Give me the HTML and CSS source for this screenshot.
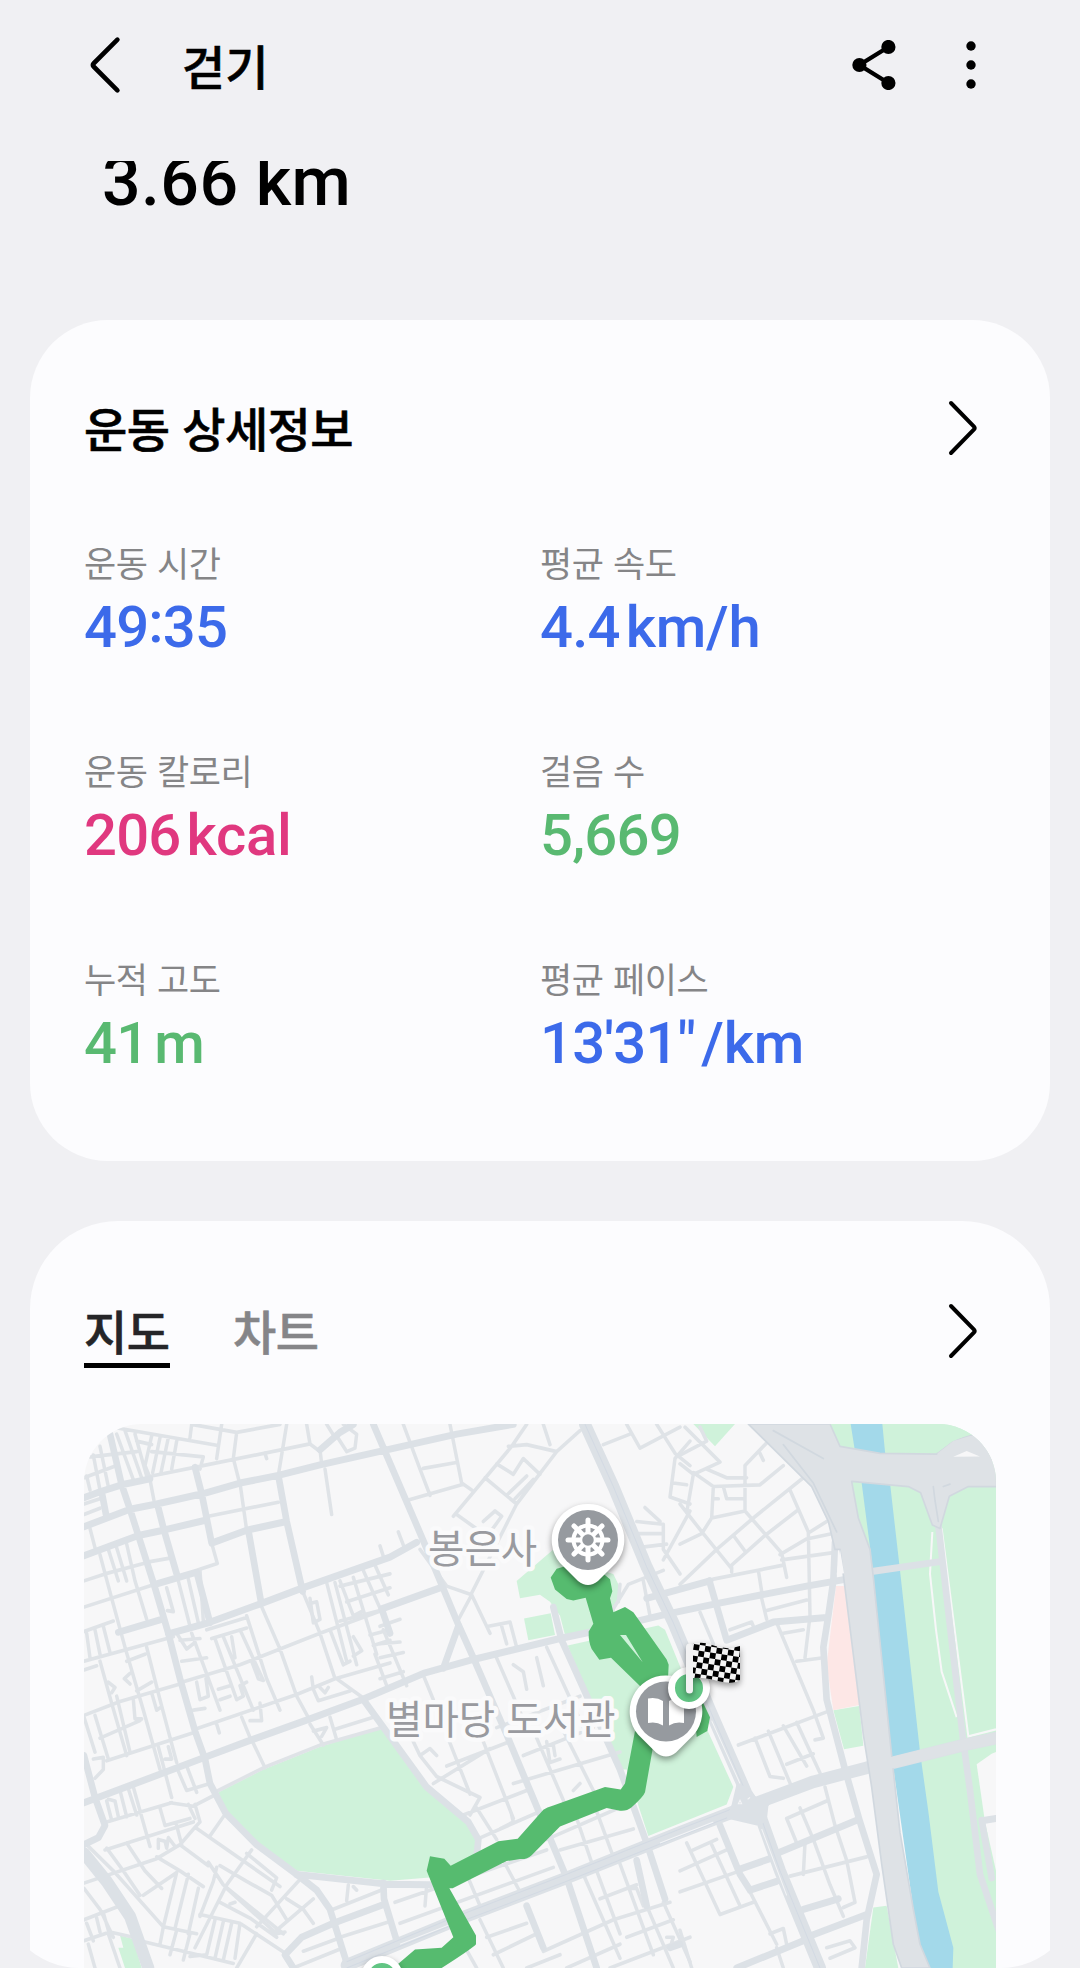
FILE: index.html
```html
<!DOCTYPE html>
<html lang="ko">
<head>
<meta charset="utf-8">
<title>걷기</title>
<link rel="stylesheet" href="styles.css">
</head>
<body>
<div class="screen">
  <header class="appbar">
    <svg class="back" viewBox="0 0 34 60"><path d="M29.4 4.7 5.6 28.5q-1.5 1.5 0 3L29.4 55.3"/></svg>
    <h1 class="appbar-title">걷기</h1>
    <svg class="share" viewBox="0 0 44 50"><path d="M36.400 7 7.400 25 36.400 43"/><circle cx="36.400" cy="7" r="7.100"/><circle cx="7.400" cy="25" r="7.100"/><circle cx="36.400" cy="43" r="7.100"/></svg>
    <svg class="more" viewBox="0 0 10 50"><circle cx="5" cy="6" r="4.700"/><circle cx="5" cy="25" r="4.700"/><circle cx="5" cy="44" r="4.700"/></svg>
  </header>

  <section class="summary"><p class="distance">3.66 km</p></section>

  <section class="card details">
    <div class="card-head">
      <h2 class="card-title">운동 상세정보</h2>
      <svg class="next" viewBox="0 0 30 56"><path d="M3 3 26 26.500q1.300 1.500 0 3L3 53"/></svg>
    </div>
    <dl class="stats">
      <div class="stat"><dt>운동 시간</dt><dd class="blue time">49<span class="colon">:</span>35</dd></div>
      <div class="stat"><dt>평균 속도</dt><dd class="blue">4.4<span class="unit">km/h</span></dd></div>
      <div class="stat"><dt>운동 칼로리</dt><dd class="pink">206<span class="unit">kcal</span></dd></div>
      <div class="stat"><dt>걸음 수</dt><dd class="green">5,669</dd></div>
      <div class="stat"><dt>누적 고도</dt><dd class="green">41<span class="unit">m</span></dd></div>
      <div class="stat"><dt>평균 페이스</dt><dd class="blue">13'31"<span class="unit">/km</span></dd></div>
    </dl>
  </section>

  <section class="card route-card">
    <div class="tabs-row">
      <nav class="tabs"><span class="tab active">지도</span><span class="tab">차트</span></nav>
      <svg class="next" viewBox="0 0 30 56"><path d="M3 3 26 26.500q1.300 1.500 0 3L3 53"/></svg>
    </div>
    <div class="map">
      <svg class="layer" viewBox="12 11 2736 1557" preserveAspectRatio="none">
        <!-- parks, river and blocks -->
        <g class="park">
          <path d="M415 1065 550 1000 720 935 905 880 1040 1045 1165 1150 1190 1195 1185 1300 1040 1310 930 1318 650 1290 530 1210 437 1120Z"/>
          <path d="M120 1475 160 1485 185 1568H135L115 1510 130 1510Z"/>
          <path d="M1310 460 1420 370 1460 400 1600 440 1620 480 1605 540 1600 595 1455 615 1440 560 1410 520 1380 500 1320 510Z"/>
          <path d="M1332 568 1412 553 1425 615 1345 630Z"/>
          <path d="M1463 645 1735 588 1755 600 1850 820 1960 1050 1940 1100 1705 1190 1640 1000 1612 1000Z"/>
          <path d="M2250 11H2748V1568H2540L2440 1000 2315 180Z"/>
          <path d="M2260 830 2338 818 2350 932 2292 942Z"/>
          <path d="M2380 1395 2420 1390 2455 1568H2355Z"/>
          <path d="M1840 11H1965L1905 75Z"/>
        </g>
        <path class="clinic" d="M2268 475 2297 475 2338 815 2260 830 2240 700Z"/>
        <path class="block" d="M2690 985 2735 955 2748 950V1290L2715 1150Z"/>
        <path class="water" d="M2312 11H2407L2415 90 2430 180 2460 430 2520 950 2545 1120 2575 1350 2620 1510 2618 1568H2550L2515 1500 2460 1130 2435 960 2375 400 2345 180 2325 90Z"/>
        <g class="trail" transform="translate(1800)"><path d="M757 320 750 440 768 600 785 720 830 850M785 310 865 905 948 885"/></g>

        <!-- side streets -->
        <g class="street">
          <path d="M60 14 410 72M335 12 330 50M335 12 470 35 600 12M425 12 410 110M470 35 460 110 480 185M215 160 380 128 690 68 720 90M620 12 595 158M680 12 690 68M215 45 195 130 210 165M240 50 218 150M265 50 243 150M290 60 275 140M215 90 370 105 360 140M110 40 160 170M135 30 185 165M165 40 200 160M60 75 85 190M40 100 60 200M20 160 30 200M12 165 110 130M30 105 170 90M170 60 215 70"/>
          <path d="M210 170 222 230M480 180 500 315M385 275 595 235M735 140 755 270M740 12 765 50M770 45 800 90M790 12 830 40 825 80 800 90M720 85 725 125M555 95 560 110M12 270 60 252M12 240 60 225M30 310 45 365"/>
          <path d="M60 385 95 510 135 650M85 370 115 460M110 365 140 460M140 355 165 460 200 570M12 460 75 440 210 405 270 395M12 535 225 470M395 352 412 410 355 428M12 605 100 575M12 690 280 620M12 715 50 703M20 610 30 680M45 600 60 670M70 590 90 665M60 690 95 810 140 960M12 845 120 805 300 755M135 650 190 830 240 1000M200 650 240 800 290 980M140 690 195 670M12 850 45 950M45 845 85 970M60 910 180 860M80 975 340 895M40 970 70 965 70 1000 45 1025M110 790 150 950M85 750 105 765 95 780M150 725 133 740 150 755M170 775 215 750M215 780 230 830 245 820M160 800 165 855 185 855"/>
          <path d="M262 545 280 548 260 480M295 460 330 590M325 455 355 580M360 430 370 575M543 530 600 655 650 790 690 860M668 490 720 610 765 740M305 690 380 680M335 610 420 830M305 750 480 700 720 610 905 545M340 830 375 825M345 885 650 785 765 740 930 695M500 560 560 740 600 830M380 600 500 565M395 625 500 595M430 620 490 760 520 830M455 620 465 680M480 600 550 745 535 740 515 690M405 625 440 720 470 800M415 770 450 760M420 800 450 790M485 850 515 920M350 750 360 800 385 790 378 740M410 870 418 895M470 800 490 790 480 760 500 750M540 810 545 860 510 860M695 735 700 770M700 770 715 803 810 775M770 740 850 795M720 765 735 780 745 765M290 610 320 655 340 640M300 630 360 625"/>
          <path d="M740 465 800 690M690 510 700 580 720 570 710 520 690 525M765 465 830 700M780 460 820 560 850 545M780 475 930 440M800 520 930 480M820 450 890 670M850 430 910 560M885 415 925 500M780 575 900 545M870 615 930 600M750 600 790 700 810 690M820 620 845 660 820 675M880 645 930 630M885 670 920 760M900 360 910 390M690 870 730 930M750 850 770 915M765 885 880 850M700 890 740 880 725 905M415 1060 550 995 720 930 905 880M520 925 555 995M235 935 275 1080M265 935 275 970 255 970M320 990 350 1065M295 1005 320 1060 390 1040"/>
          <path d="M270 1095 340 1105 400 1075M160 1050 210 1220M145 1055 170 1130M120 1060 140 1135M80 1090 95 1145M85 1085 105 1090 115 1135M80 1150 275 1095M240 1110 255 1160 330 1140M75 1230 340 1150M12 1325 230 1255 300 1215 345 1165M345 1165 600 1335M20 1215 100 1290 245 1445M80 1225 130 1290 180 1360M140 1210 195 1290 245 1340M290 1160 305 1215M235 1225 235 1200 255 1205 260 1225 265 1195 285 1220M230 1250 300 1290 370 1335M190 1360 290 1295 250 1450M325 1300 285 1455M300 1215 385 1275M385 1265 430 1330 610 1470M355 1340 325 1470M345 1100 360 1150 345 1165M390 1190 430 1135M325 1100 345 1140M515 1230 440 1330 345 1510M410 1280 400 1320 360 1420M420 1275 500 1320 575 1360 620 1430"/>
          <path d="M500 1240 590 1310 575 1345M440 1340 590 1470 615 1465M420 1380 510 1425 590 1480M655 1320 530 1450M700 1370 590 1460M620 1370 670 1400 700 1440M450 1385 465 1380M250 1450 350 1470M360 1415 480 1440 615 1525M180 1490 460 1555M250 1450 240 1500M290 1460 270 1530M330 1470 310 1545M405 1430 380 1530 330 1535M430 1435 405 1540M455 1440 430 1545M480 1440 465 1540M530 1470 470 1568M805 1330 800 1375M820 1335 830 1345M760 1400 905 1345M670 1520 770 1485M780 1480 930 1435M640 1568 790 1510M12 1340 60 1400 100 1480M12 1430 120 1390M12 1490 90 1465 160 1480M20 1440 40 1490M50 1425 60 1465M70 1410 85 1460M25 1500 45 1568M85 1470 120 1568"/>
        </g>
        <g class="street" transform="translate(900)">
          <path d="M70 12 120 140 150 215M210 12 245 180 275 200M80 230 245 185M130 138 225 122M220 275 395 75 440 12M600 30 530 90 440 70 385 75M530 90 410 240 275 495M230 270 325 335M490 12 510 70M350 125 400 155 430 110 480 155M315 165 410 240M440 160 380 215M460 170 405 225M310 290 345 260 365 275 335 315M120 370 200 475 275 500 330 610M275 500 230 580M325 590 390 578 410 650M365 590 380 640M55 320 75 370"/>
          <path d="M0 590 60 570M0 640 60 635M10 600 80 760M0 680 70 665M0 740 70 720M345 670 450 900M400 700 430 720 440 770M470 680 490 760M130 730 160 800M500 650 620 900M600 790 350 880M80 880 120 960 170 1020 300 1080M200 900 270 1070M160 1040 330 940M120 960 150 940 170 960M200 990 390 920M310 920 400 1140M300 1080 270 1130M430 960 640 880M470 910 560 1110M500 920 510 980 540 970M520 930 525 960M540 870 640 1060M400 1040 720 950M580 1060 600 1040M250 1130 440 1060M290 1110 350 1200M360 1170 400 1150 395 1130M290 1200 480 1120M500 1200 740 1100M590 1140 640 1280M650 1120 700 1250M540 1230 760 1170M500 1150 570 1130M140 1330 135 1390M260 1300 300 1390M370 1260 420 1350M45 1380 500 1230M60 1440 520 1280"/>
          <path d="M610 1300 720 1540M650 1290 720 1470M720 1270 820 1530M740 1340 770 1340 790 1390M660 1370 770 1330M700 1430 870 1380M740 1480 880 1430M690 1568 930 1480M800 1390 880 1568M850 1380 930 1550M860 1480 880 1480 870 1510M300 1430 370 1568M320 1480 440 1440M340 1530 470 1470M560 1568 720 1500M490 1520 700 1430M440 1568 540 1530M250 1500 290 1568"/>
          <path d="M670 70 750 40M740 12 780 80 900 20M830 12 885 95 930 130M930 60 885 110 870 220 930 240M880 180 920 185M795 250 840 290M770 290 850 298M775 325 850 325M775 365 860 355M850 298 850 370 900 440M850 400 930 260M700 540 745 470 850 430M720 470 715 520M790 460 810 560"/>
        </g>
        <g class="street" transform="translate(1800)">
          <path d="M15 20 120 120 40 155 0 125M40 155 20 265M0 240 70 325 155 425M40 150 100 190 240 185 310 130M80 140 140 165 200 165M260 65 195 130 195 260 305 380 320 450M60 20 80 60 0 100M100 190 95 280 195 260M95 280 65 325 0 355M130 190 140 225 190 225M100 225 115 225M240 95 250 115M0 470 110 370 220 280 370 165M155 420 155 435M155 415 255 330 350 260M160 330 195 375M330 200 385 320 390 560 375 680M300 385 380 340 455 325M390 320 440 290M305 400 455 380M100 455 310 415M235 430 245 490M245 510 260 570M260 545 380 515M60 550 100 640M150 600 215 578 220 590M290 580 400 830 430 910 405 915M310 610 370 600M350 690 430 680"/>
          <path d="M175 930 440 835M225 910 270 1020 310 1025M265 890 335 1050M310 875 380 990M350 865 420 1010M320 985 400 955M435 1050 465 1160 500 1260 525 1380 490 1395M350 1210 320 1140 440 1090M360 1110 400 1200 450 1330 490 1420M330 1305 560 1250M375 1210 370 1300M20 1210 120 1415 220 1380M95 1215 180 1390M0 1290 140 1230M0 1350 180 1290M40 1230 110 1200M210 1350 290 1500M270 1470 310 1455 320 1500M440 1510 510 1490 525 1510 450 1540M0 1460 35 1568M290 1510 310 1568"/>
        </g>

        <!-- main roads -->
        <g class="road">
          <path d="M12 222 60 205 125 185 210 168M12 305 150 255 230 240 370 210 480 180 595 158 720 128 1130 40 1300 12M12 388 175 330 250 315 370 288M90 40 125 185 150 255 175 330 225 480 265 610 300 740 345 890 375 970 390 1040 437 1125 530 1215 650 1300 710 1345 750 1400 805 1568M345 135 365 210 395 352 500 315 620 290M505 315 543 520M595 158 620 290 668 490M880 12 1030 345 1135 585 1180 680 1280 900 1350 1060 1460 1310 1550 1568M232 240 252 315 290 440M225 470 350 435 390 580M65 205 78 270M265 612 385 580 543 525 668 480 930 392 1010 350M115 607 245 570"/>
          <path d="M12 1095 375 965 500 920 690 855 845 800 1030 725 1180 685 1440 625 1540 605 1760 555 1910 525 2180 475 2300 455M850 800 1040 1050 1165 1150 1195 1200 1190 1250M12 960 45 1080 75 1160 55 1195 12 1215M650 1300 920 1328 1050 1330M640 1568 615 1530 665 1480 760 1440 915 1385M910 1325 912 1370 950 1490M905 540 930 610M905 540 1080 480M720 85 780 35 820 12M1420 535 1445 630 1620 1000 1700 1210 1755 1370M1135 590 1090 710M1770 1510 1800 1500M1340 1390 1390 1510M1670 1260 1700 1390M1700 510 1890 460"/>
          <path d="M1888 460 1940 630 2080 578 2240 565M1920 1160 1980 1300 2010 1345M1980 1285 2070 1255M2010 1345 2090 1320M2090 1240 2330 1145M2170 1400 2275 1370M2180 1480 2360 1415M1970 1568 2170 1490M2265 350 2260 460 2245 560 2230 650 2240 800 2295 1000 2340 1150 2390 1300 2360 1430 2345 1568M2375 433 2580 405M2575 300 2650 920 2670 1060 2700 1300 2760 1470M2715 1145 2748 1140M2705 1145 2735 1310"/>
        </g>
        <g class="avenue">
          <path d="M12 1240 80 1320 150 1420 205 1568"/>
          <path d="M1515 12 1600 190 1700 420 1780 580 1890 830 2000 1070 2040 1130 2100 1290 2220 1568"/>
          <path d="M800 1560 1130 1430 1460 1310 1800 1180 1990 1110 2200 1035 2360 995 2440 980 2650 930 2748 910"/>
        </g>
        <path class="centerline" d="M1515 12 1600 190 1700 420 1780 580 1890 830 2000 1070M800 1550 1130 1420 1460 1300 1800 1170 1990 1100M800 1568 1130 1440 1460 1320 1800 1190 1990 1120M2040 1130 2100 1290 2220 1568"/>
        <path class="median" d="M1895 860 1980 1040M2045 1170 2120 1360M960 1500 1130 1436M1740 1210 1900 1150"/>
        <path class="junction" d="M1970 1040 2000 1050 2030 1080 2080 1080 2065 1105 2060 1150 2030 1160 1940 1140 1955 1100Z"/>
        <path class="median" d="M1975 1098 1980 1088 1985 1098ZM2003 1085 2010 1080"/>

        <!-- riverside expressway -->
        <path class="highway" d="M2005 11H2250L2280 75 2400 95 2570 97 2620 60 2670 45 2750 0V190H2665L2608 218 2580 310 2557 300 2522 208 2485 190 2315 175 2335 280 2370 370 2380 450 2435 960 2460 1180 2500 1400 2520 1500 2550 1568H2465L2440 1500 2405 1270 2375 1050 2350 900 2295 480 2280 370 2265 370 2245 290 2195 190Z"/>
        <path class="park" d="M2680 11H2748V60L2700 40 2660 43 2615 62 2573 92 2480 90V11Z"/>
        <path class="avenue-fill" d="M2573 95 2620 60 2670 45 2705 42 2748 60V120H2573Z"/>
        <path class="block" d="M2280 370 2292 438 2270 442ZM2620 105 2660 88 2700 104Z"/>
        <path class="ramp" d="M2080 30 2230 110M2110 70 2200 180 2270 320M2560 190 2565 230 2575 290M2590 190 2610 183"/>
        <!-- bridges over the river -->
        <path class="bridge" d="M2400 980 2440 980 2650 930 2748 910"/>

        <!-- walked route -->
        <path class="walk" d="M940 1568 1005 1515 1085 1510 1120 1480 1040 1290 1050 1248 1093 1255 1112 1275 1255 1205 1313 1198 1390 1115Q1400 1108 1420 1103L1575 1050 1622 1057 1635 1040 1665 890 1720 930 1695 1065Q1690 1078 1655 1108 1640 1120 1620 1118L1580 1110 1440 1163 1355 1245Q1340 1258 1320 1256L1280 1262 1118 1340H1108L1188 1475V1500Q1180 1510 1085 1568Z"/>
        <path class="walk" d="M1412 450 1430 425 1520 400 1590 455 1597 490 1590 510 1600 550 1635 535 1660 550 1760 685 1766 700 1762 780 1690 770 1593 680 1558 686 1535 655Q1525 635 1526 605L1540 583 1517 508 1480 516 1460 512 1425 485ZM1620 615 1688 693 1638 615Z"/>
        <path class="walk" d="M1840 800 1870 810 1890 850 1882 890 1850 907Z"/>
      </svg>

      <svg class="layer" viewBox="84 1424 912 544">
        <defs>
          <pattern id="checks" width="11.600" height="11.600" patternUnits="userSpaceOnUse" patternTransform="translate(694 1644) rotate(9)">
            <rect width="11.600" height="11.600" fill="#f4f4f4"/><rect width="5.800" height="5.800"/><rect x="5.800" y="5.800" width="5.800" height="5.800"/>
          </pattern>
          <g id="pin"><path class="pin-shell" d="M0-36A36 36 0 0 1 28 23L10 41Q0 49-10 41L-28 23A36 36 0 0 1 0-36Z"/><circle class="pin-face" r="30"/></g>
        </defs>
        <text class="place" x="428" y="1563">봉은사</text>
        <text class="place" x="386" y="1734">별마당 도서관</text>
        <g class="shadow"><use href="#pin" x="588" y="1540"/></g>
        <g transform="translate(588 1540)">
          <path class="wheel" d="M0-20V20M-20 0H20M-14-14 14 14M-14 14 14-14"/>
          <circle class="rim" r="14.500"/><circle class="hub" r="7"/>
        </g>
        <g class="shadow"><use href="#pin" x="666" y="1711.500"/></g>
        <path class="book" d="M648 1698.500Q657 1697 663 1701V1725.500Q656 1721 648 1723ZM684 1698.500Q675 1697 669 1701V1725.500Q676 1721 684 1723Z"/>
        <g class="shadow"><circle class="stop" cx="689" cy="1688" r="17.500"/></g>
        <g class="shadow">
          <path fill="url(#checks)" d="M693 1644Q702 1641 712 1645T732 1648L740 1646V1680Q733 1685 718 1681T693 1678Z"/>
          <path class="pole" d="M689.500 1647V1690"/>
        </g>
        <g class="shadow"><circle class="stop" cx="382" cy="1977" r="17.500"/></g>
      </svg>
    </div>
  </section>
</div>
</body>
</html>
```
FILE: styles.css
```css
* { box-sizing: border-box; margin: 0; padding: 0; }

body {
  background: #f0f0f3;
  color: #000;
  font-family: "Noto Sans CJK KR", "Noto Sans", sans-serif;
}

.screen {
  width: 1080px;
  height: 1968px;
  overflow: hidden;
  border-radius: 0 0 80px 80px;
  background: #f0f0f3;
}

/* App bar */
.appbar {
  display: flex;
  align-items: center;
  height: 161px;
  padding: 0 104px 31px 88px;
}
.back { width: 34px; height: 60px; fill: none; stroke: #000; stroke-width: 4.6; stroke-linecap: round; }
.appbar-title { margin-left: 60px; font-size: 47px; font-weight: 500; line-height: 60px; -webkit-text-stroke: .6px currentColor; }
.share { width: 44px; height: 50px; margin-left: auto; stroke: #000; stroke-width: 4.4; }
.share path { fill: none; }
.share circle { stroke: none; }
.more { width: 10px; height: 50px; margin-left: 70px; }

.summary { height: 159px; padding-left: 102px; overflow: hidden; }
.distance { margin-top: -19px; font: 500 68px/80px Roboto, sans-serif; letter-spacing: .4px; }

/* Cards */
.card { margin: 0 30px; background: #fcfcfe; }
.details { height: 841px; padding: 77px 54px 84px; border-radius: 78px; }
.card-head, .tabs-row { display: flex; justify-content: space-between; }
.card-head { height: 60px; align-items: center; padding-right: 18px; }
.card-title { font-size: 47px; font-weight: 500; line-height: 60px; letter-spacing: -.5px; -webkit-text-stroke: .6px currentColor; }
.next { width: 30px; height: 56px; fill: none; stroke: #000; stroke-width: 4; stroke-linecap: round; }
.card-head .next { margin-top: 2px; }

.stats { display: grid; grid-template-columns: 456px 1fr; row-gap: 84px; margin-top: 81px; }
.stat { display: flex; flex-direction: column; gap: 7px; }
.stat dt { color: #858587; font-size: 35px; line-height: 48px; letter-spacing: -.4px; }
.stat dd { padding-bottom: 1px; font: 500 58px/68px Roboto, sans-serif; letter-spacing: -.8px; white-space: nowrap; }
.stats { row-gap: 84px; }
.unit { margin-left: 6px; letter-spacing: -.2px; }
.colon { position: relative; top: -5px; }
.blue { color: #3c6aea; }
.pink { color: #e0387f; }
.green { color: #59b971; }

/* Map card */
.route-card { margin-top: 60px; height: 800px; padding: 78px 54px 0; border-radius: 88px 88px 0 0; }
.tabs-row { height: 69px; padding-right: 18px; }
.tabs-row .next { margin-top: 4px; }
.tabs { display: flex; gap: 63px; }
.tab { width: 86px; padding: 1px 0 3px; border-bottom: 5px solid transparent; color: #858588; font-size: 47px; font-weight: 500; line-height: 60px; letter-spacing: -.4px; white-space: nowrap; -webkit-text-stroke: .6px currentColor; }
.tab.active { border-color: #000; color: #252528; }

.map {
  position: relative;
  height: 600px;
  margin-top: 56px;
  overflow: hidden;
  border-radius: 58px 58px 0 0;
  background: #f7f7f8;
}
.layer { position: absolute; top: 0; left: 0; width: 912px; height: 544px; }

.park { fill: #cff2da; }
.water { fill: #a3d9ea; }
.clinic { fill: #fde7e6; }
.block { fill: #f7f7f8; }
.trail { fill: none; stroke: #f7f7f8; stroke-width: 6; }
.street, .road, .avenue, .ramp, .bridge { fill: none; stroke: #dfe3e7; stroke-linejoin: round; stroke-linecap: round; }
.street { stroke-width: 10.5; }
.road { stroke: #dce1e6; stroke-width: 20; }
.avenue { stroke: #dce1e6; stroke-width: 36; }
.bridge { stroke: #dee2e6; stroke-width: 32; }
.centerline { fill: none; stroke: #d3dae3; stroke-width: 3; }
.median { fill: none; stroke: #f3f4f6; stroke-width: 3; }
.junction { fill: #dce1e6; }
.highway { fill: #dee2e6; stroke: #d1d8df; stroke-width: 5; stroke-linejoin: round; }
.avenue-fill { fill: #dee2e6; }
.ramp { stroke: #d1d8df; stroke-width: 5; }
.walk { fill: #56bb6f; fill-rule: evenodd; }

.place {
  fill: #999a9f;
  font-size: 39.6px;
  stroke: #fafafb;
  stroke-width: 9;
  stroke-linejoin: round;
  paint-order: stroke;
}
.shadow { filter: drop-shadow(0 3px 3px rgba(0, 0, 0, .4)); }
.pin-shell { fill: #fff; }
.pin-face, .hub { fill: #969a9f; }
.wheel { fill: none; stroke: #fff; stroke-width: 5; stroke-linecap: round; }
.rim { fill: none; stroke: #fff; stroke-width: 4; }
.hub { stroke: #fff; stroke-width: 2.5; }
.book { fill: #fff; }
.stop { fill: #62c584; stroke: #fff; stroke-width: 7; }
.pole { fill: none; stroke: #f2f2f3; stroke-width: 7; stroke-linecap: round; }
```
